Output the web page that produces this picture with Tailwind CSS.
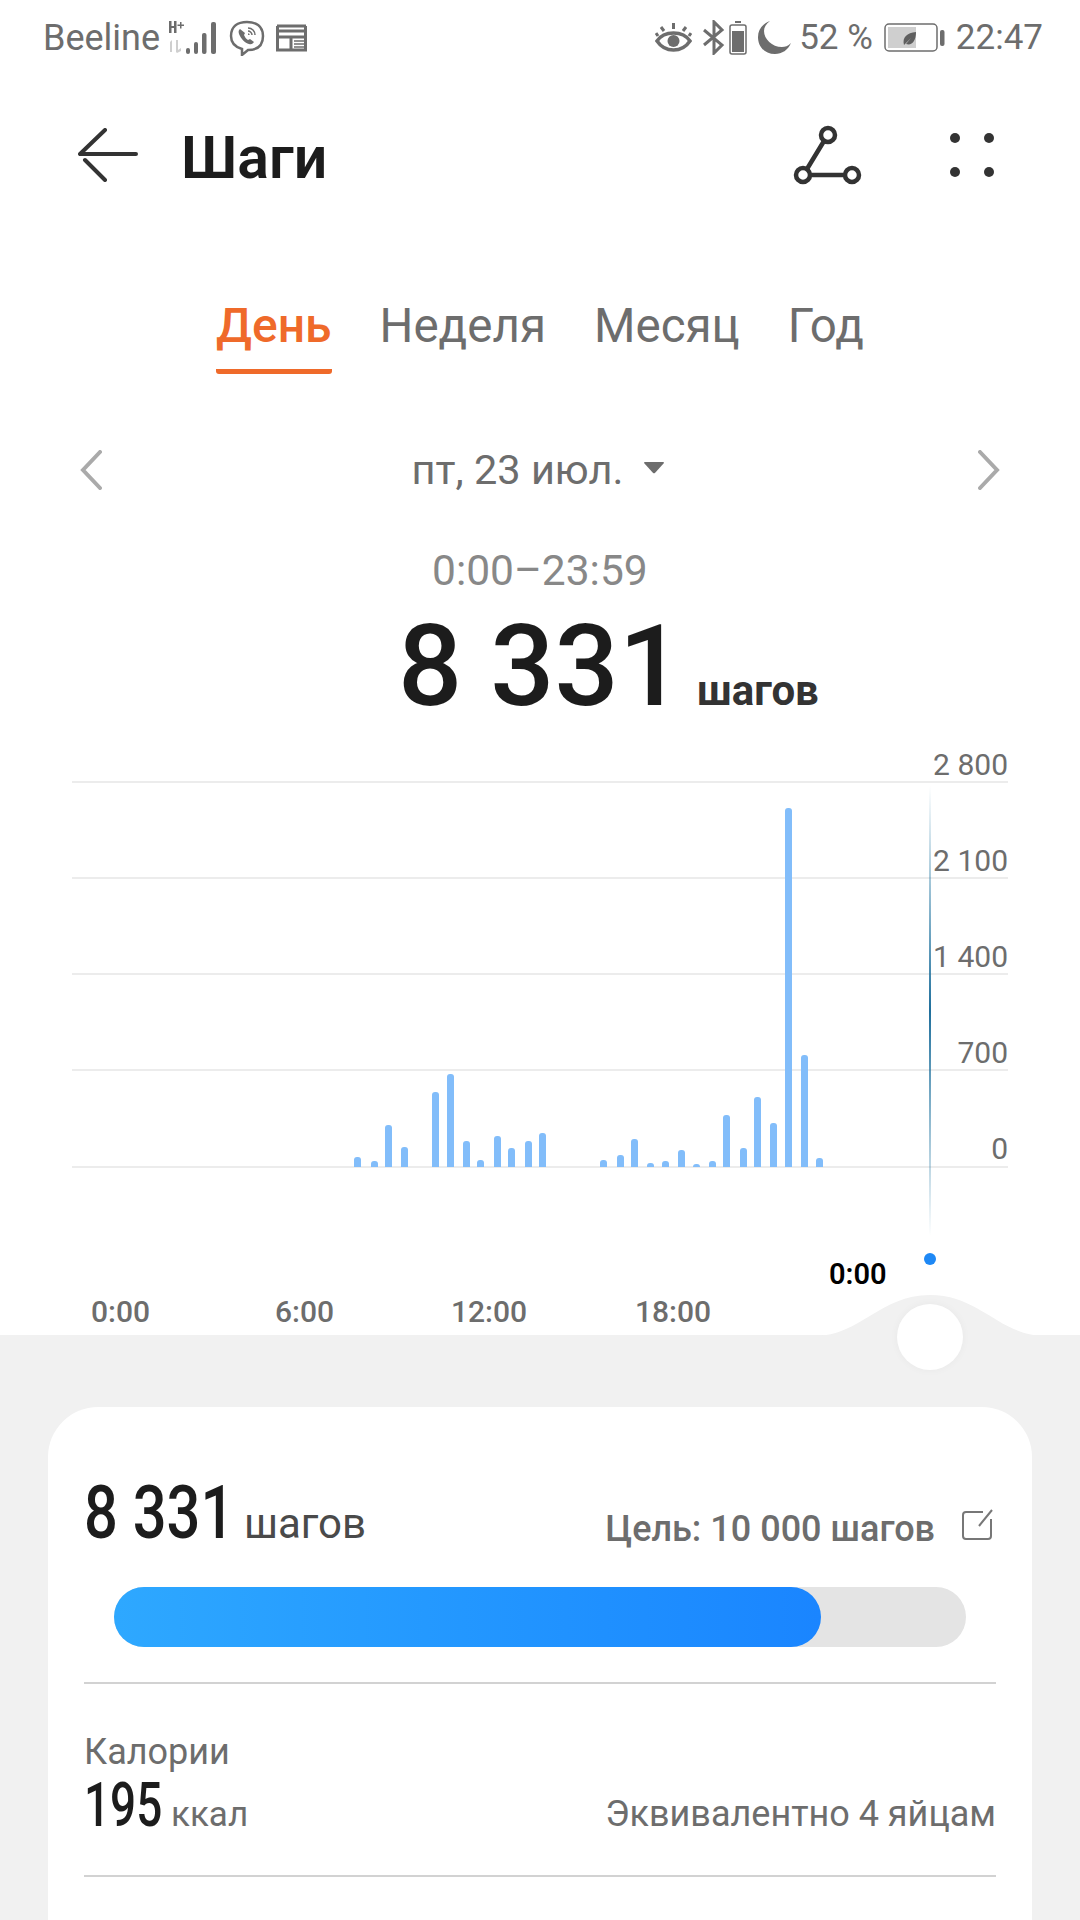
<!DOCTYPE html>
<html lang="ru">
<head>
    <meta charset="UTF-8">
    <meta name="viewport" content="width=device-width, initial-scale=1.0">
    <title>Шаги</title>
    <script src="https://cdn.jsdelivr.net/npm/@tailwindcss/browser@4"></script>
</head>
<body class="bg-white">
<div class="w-[1080px] h-[1920px] overflow-hidden flex flex-col bg-white font-['Roboto',sans-serif]">
    <!-- Status bar -->
    <div class="h-[75px] shrink-0 flex items-center pl-[43px] pr-[37px] text-[35px] text-[#6d6d6d]">
        <span class="text-[36px] leading-none">Beeline</span>
        <svg class="ml-[8px]" width="54" height="36" viewBox="0 0 54 36" fill="#6d6d6d">
            <path d="M1 1h2.500v12H1zM6 1h2.500v12H6zM3 6h3v2H3z"/>
            <path d="M12 2h1.500v2.500H16V6h-2.500v2.500H12V6H9.500V4.500H12z"/>
            <path d="M2 22l2-2v12H2zM8 20h2v10l3-2v3l-4 2-1-1z" fill="#cfcfcf"/>
            <rect x="18" y="28" width="4" height="6" rx="2"/><rect x="26" y="22" width="4" height="12" rx="2"/>
            <rect x="34" y="13" width="4.500" height="21" rx="2"/><rect x="43" y="2" width="5" height="32" rx="2"/>
        </svg>
        <svg class="ml-[7px]" width="36" height="36" viewBox="0 0 36 36" fill="none" stroke="#6d6d6d">
            <path d="M18 2c9 0 16 4 16 14s-6 14-15 14l-6 5v-6C6 27 2 23 2 16 2 6 9 2 18 2z" stroke-width="2.500"/>
            <path d="M11 9c-1 1-2 2-1 5 2 5 6 9 10 10 3 1 4-1 5-2l-4-3-2 1c-2-1-3-3-4-5l1-2z" fill="#6d6d6d" stroke="none"/>
            <path d="M19 8c4 0 7 3 7 7M19 11c2 0 4 2 4 4M19 14c1 0 1 0 1 1" stroke-width="1.500"/>
        </svg>
        <svg class="ml-[11px]" width="31" height="29" viewBox="0 0 31 29" fill="none" stroke="#6d6d6d">
            <path d="M1 3h29M1 8h29" stroke-width="3"/>
            <path d="M1.500 3v24h28V3M1.500 14h28M15 14v13" stroke-width="3"/>
            <path d="M18 18h10M18 21h10M18 24h10" stroke-width="1.500"/>
        </svg>
        <div class="flex-1"></div>
        <svg width="37" height="31" viewBox="0 0 37 31" fill="none" stroke="#6d6d6d" stroke-width="3.500">
            <path d="M2 19c4-6 9-8 16.500-8S31 13 35 19c-4 6-9 9-16.500 9S6 25 2 19z"/>
            <circle cx="18.500" cy="19" r="6" fill="#6d6d6d" stroke="none"/>
            <path d="M18.500 7V1M9 9L6 5M28 9l3-4M3 14L1 11M34 14l2-3" stroke-width="3"/>
        </svg>
        <svg class="ml-[11px]" width="23" height="35" viewBox="0 0 23 35" fill="none" stroke="#6d6d6d" stroke-width="3">
            <path d="M1 10l18 15-8 8V2l8 8L1 25"/>
        </svg>
        <svg class="ml-[3px]" width="18" height="34" viewBox="0 0 18 34" fill="none">
            <rect x="6" y="0" width="6" height="2" fill="#6d6d6d"/>
            <rect x="1" y="4" width="16" height="29" rx="2" stroke="#6d6d6d" stroke-width="1.500"/>
            <rect x="3" y="10" width="12" height="21" fill="#6d6d6d"/>
        </svg>
        <svg class="ml-[11px]" width="33" height="33" viewBox="0 0 33 33" fill="#6d6d6d">
            <path d="M12 0C4 3 0 9 0 16c0 10 7 17 17 17 7 0 13-4 16-11-3 3-6 4-9 4C14 26 6 18 6 10c0-4 2-7 6-10z"/>
        </svg>
        <span class="ml-[8px] leading-none whitespace-nowrap">52 %</span>
        <svg class="ml-[11px]" width="61" height="30" viewBox="0 0 61 30" fill="none">
            <rect x="1" y="1" width="52" height="27" rx="4" stroke="#6d6d6d" stroke-width="1.500"/>
            <rect x="4" y="4" width="28" height="21" fill="#cfcfcf"/>
            <rect x="56" y="7" width="4.500" height="16" rx="2" fill="#6d6d6d"/>
            <path d="M20 22c-2-8 3-12 12-13 0 9-4 14-10 12l5-6-6 6z" fill="#5f5f5f"/>
        </svg>
        <span class="ml-[11px] leading-none">22:47</span>
    </div>

    <!-- Header -->
    <div class="h-[160px] shrink-0 flex items-center relative pl-[78px]">
        <svg width="60" height="54" viewBox="0 0 60 54" fill="none" stroke="#333" stroke-width="4" stroke-linecap="round">
            <path d="M2 26h56M27 2L2 26M7 32l20 20"/>
        </svg>
        <span class="ml-[43px] mt-[4px] text-[59px] font-semibold text-[#1c1c1c] leading-none">Шаги</span>
        <svg class="absolute left-[790px] top-[45px]" width="76" height="70" viewBox="0 0 76 70" fill="none" stroke="#333" stroke-width="4.500">
            <circle cx="38" cy="15" r="7"/><circle cx="13" cy="55" r="7"/><circle cx="62" cy="55" r="7"/>
            <path d="M34 21L17 49M20 55h35"/>
        </svg>
        <div class="absolute left-[950px] top-[58px] grid grid-cols-2 gap-x-[24px] gap-y-[24px]">
            <span class="w-[10px] h-[10px] rounded-full bg-[#333]"></span><span class="w-[10px] h-[10px] rounded-full bg-[#333]"></span>
            <span class="w-[10px] h-[10px] rounded-full bg-[#333]"></span><span class="w-[10px] h-[10px] rounded-full bg-[#333]"></span>
        </div>
    </div>

    <!-- Tabs -->
    <div class="h-[139px] shrink-0 flex pl-[216px] gap-[48px] pt-[64px] text-[48px] leading-[54px] font-medium text-[#6d6d6d]">
        <div class="h-[75px] border-b-[5px] border-[#ef6a2a] text-[#ef6a2a] rounded-b-[3px]">День</div>
        <div class="text-[47.500px] font-normal">Неделя</div>
        <div class="text-[47.500px] font-normal">Месяц</div>
        <div class="text-[47.500px] font-normal">Год</div>
    </div>

    <!-- Date row -->
    <div class="h-[60px] mt-[66px] shrink-0 flex items-center justify-between px-[80px] text-[#6d6d6d]">
        <svg width="22" height="40" viewBox="0 0 22 40" fill="none" stroke="#aaa" stroke-width="4" stroke-linecap="round"><path d="M20 2L3 20l17 18"/></svg>
        <div class="flex items-center gap-[21px] text-[41.500px] leading-none mr-[4px]">
            <span>пт, 23 июл.</span>
            <svg class="-mt-[6px]" width="20" height="13" viewBox="0 0 22 14" fill="#6d6d6d"><path d="M1 1h20a1 1 0 0 1 1 1L12 13a1.500 1.500 0 0 1-2 0L0 2a1 1 0 0 1 1-1z"/></svg>
        </div>
        <svg width="22" height="40" viewBox="0 0 22 40" fill="none" stroke="#aaa" stroke-width="4" stroke-linecap="round"><path d="M2 2l17 18L2 38"/></svg>
    </div>

    <!-- Total -->
    <div class="h-[50px] mt-[46px] shrink-0 pl-[432px] text-[42.500px] leading-[50px] text-[#888]">0:00–23:59</div>
    <div class="h-[129px] shrink-0 flex items-baseline pl-[398px] pt-[8px] text-[#1c1c1c] font-medium">
        <span class="text-[113px] leading-[125px]">8 331</span>
        <span class="ml-[14px] text-[42px] leading-none font-bold text-[#333]">шагов</span>
    </div>

    <!-- Chart -->
    <div class="relative h-[610px] shrink-0">
        <svg class="absolute left-0 top-0" width="1080" height="610" viewBox="0 725 1080 610" fill="none">
            <defs>
                <linearGradient id="cursor" x1="0" y1="0" x2="0" y2="1">
                    <stop offset="0" stop-color="#2a7fa8" stop-opacity="0"/>
                    <stop offset="0.5" stop-color="#1f6f9c"/>
                    <stop offset="1" stop-color="#2a7fa8" stop-opacity="0"/>
                </linearGradient>
                <clipPath id="bars"><rect x="0" y="725" width="1080" height="442"/></clipPath>
            </defs>
            <g stroke="#e6e6e6" stroke-width="1.500">
                <path d="M72 782h936M72 878h936M72 974h936M72 1070h936M72 1167h936"/>
            </g>
            <g fill="#82bdfa" clip-path="url(#bars)">
                <rect x="354" y="1157" width="7" height="20" rx="3"/>
                <rect x="371" y="1161" width="7" height="20" rx="3"/>
                <rect x="385" y="1125" width="7" height="52" rx="3"/>
                <rect x="401" y="1147" width="7" height="30" rx="3"/>
                <rect x="432" y="1092" width="7" height="85" rx="3"/>
                <rect x="447" y="1074" width="7" height="103" rx="3"/>
                <rect x="463" y="1141" width="7" height="36" rx="3"/>
                <rect x="477" y="1160" width="7" height="20" rx="3"/>
                <rect x="494" y="1136" width="7" height="41" rx="3"/>
                <rect x="508" y="1148" width="7" height="29" rx="3"/>
                <rect x="525" y="1141" width="7" height="36" rx="3"/>
                <rect x="539" y="1133" width="7" height="44" rx="3"/>
                <rect x="600" y="1160" width="7" height="20" rx="3"/>
                <rect x="617" y="1155" width="7" height="22" rx="3"/>
                <rect x="631" y="1139" width="7" height="38" rx="3"/>
                <rect x="647" y="1163" width="7" height="20" rx="3"/>
                <rect x="662" y="1161" width="7" height="20" rx="3"/>
                <rect x="678" y="1150" width="7" height="27" rx="3"/>
                <rect x="693" y="1164" width="7" height="20" rx="3"/>
                <rect x="709" y="1161" width="7" height="20" rx="3"/>
                <rect x="723" y="1115" width="7" height="62" rx="3"/>
                <rect x="740" y="1148" width="7" height="29" rx="3"/>
                <rect x="754" y="1097" width="7" height="80" rx="3"/>
                <rect x="770" y="1123" width="7" height="54" rx="3"/>
                <rect x="785" y="808" width="7" height="369" rx="3"/>
                <rect x="801" y="1055" width="7" height="122" rx="3"/>
                <rect x="816" y="1158" width="7" height="20" rx="3"/>
            </g>
            <rect x="929" y="786" width="2" height="450" fill="url(#cursor)"/>
            <circle cx="930" cy="1259" r="6" fill="#1e88f5"/>
        </svg>

        <!-- Y axis labels -->
        <div class="absolute right-[72px] top-[16px] flex flex-col items-end text-[30px] leading-[48px] text-[#6d6d6d]">
            <span class="h-[96px]">2 800</span>
            <span class="h-[96px]">2 100</span>
            <span class="h-[96px]">1 400</span>
            <span class="h-[96px]">700</span>
            <span class="h-[96px]">0</span>
        </div>

        <!-- Selected time + X axis -->
        <span class="absolute left-[829px] top-[532px] text-[29px] leading-[34px] font-semibold text-black">0:00</span>
        <div class="absolute left-0 top-[570px] w-full text-[30px] leading-[34px] font-medium text-[#6d6d6d]">
            <span class="absolute left-[91px]">0:00</span>
            <span class="absolute left-[275px]">6:00</span>
            <span class="absolute left-[451px]">12:00</span>
            <span class="absolute left-[635px]">18:00</span>
        </div>
    </div>

    <!-- Gray panel -->
    <div class="relative flex-1 bg-[#f1f1f1] px-[48px] pt-[72px]">
        <svg class="absolute left-0 top-[-41px]" width="1080" height="42" viewBox="0 0 1080 42" fill="#f1f1f1">
            <path d="M815 42C860 42 880 1 930 1S1000 42 1045 42z"/>
        </svg>
        <div class="absolute left-[897px] top-[-31px] w-[66px] h-[66px] rounded-full bg-white shadow-[0_0_8px_rgba(0,0,0,0.04)]"></div>

        <!-- Card -->
        <div class="h-full bg-white rounded-t-[50px] px-[36px]">
            <div class="h-[277px] border-b-2 border-[#d2d2d2] relative">
                <div class="flex items-baseline pt-[65px] whitespace-nowrap">
                    <span class="w-[147px] text-[75px] leading-[80px] text-[#1c1c1c] font-medium scale-x-[0.795] origin-left">8 331</span>
                    <span class="ml-[13px] text-[42px] leading-none text-[#4a4a4a]">шагов</span>
                    <span class="ml-auto translate-y-[3px] text-[36px] leading-none font-medium text-[#6d6d6d]">Цель: 10 000 шагов</span>
                    <svg class="ml-[26px] mr-[3px] self-center translate-y-[13px]" width="32" height="32" viewBox="0 0 32 32" fill="none" stroke="#777" stroke-width="2">
                        <path d="M22 3H5a3 3 0 0 0-3 3v21a3 3 0 0 0 3 3h22a3 3 0 0 0 3-3V10M31 1L18 17"/>
                    </svg>
                </div>
                <div class="absolute left-[30px] top-[180px] w-[852px] h-[60px] rounded-full bg-[#e4e4e4]">
                    <div class="h-full w-[707px] rounded-full bg-gradient-to-r from-[#2ea8ff] to-[#1a85ff]"></div>
                </div>
            </div>
            <div class="h-[193px] border-b-2 border-[#d2d2d2] flex items-end justify-between pb-[39px] whitespace-nowrap">
                <div class="flex flex-col">
                    <span class="text-[36px] leading-[40px] text-[#6d6d6d]">Калории</span>
                    <div class="flex items-baseline mt-[2px]">
                        <span class="w-[77px] text-[62px] leading-[62px] text-[#1c1c1c] font-medium scale-x-[0.74] origin-left">195</span>
                        <span class="ml-[10px] text-[35px] leading-none text-[#6d6d6d]">ккал</span>
                    </div>
                </div>
                <span class="text-[36px] leading-none mb-[4px] text-[#6d6d6d]">Эквивалентно 4 яйцам</span>
            </div>
        </div>
    </div>
</div>
</body>
</html>
